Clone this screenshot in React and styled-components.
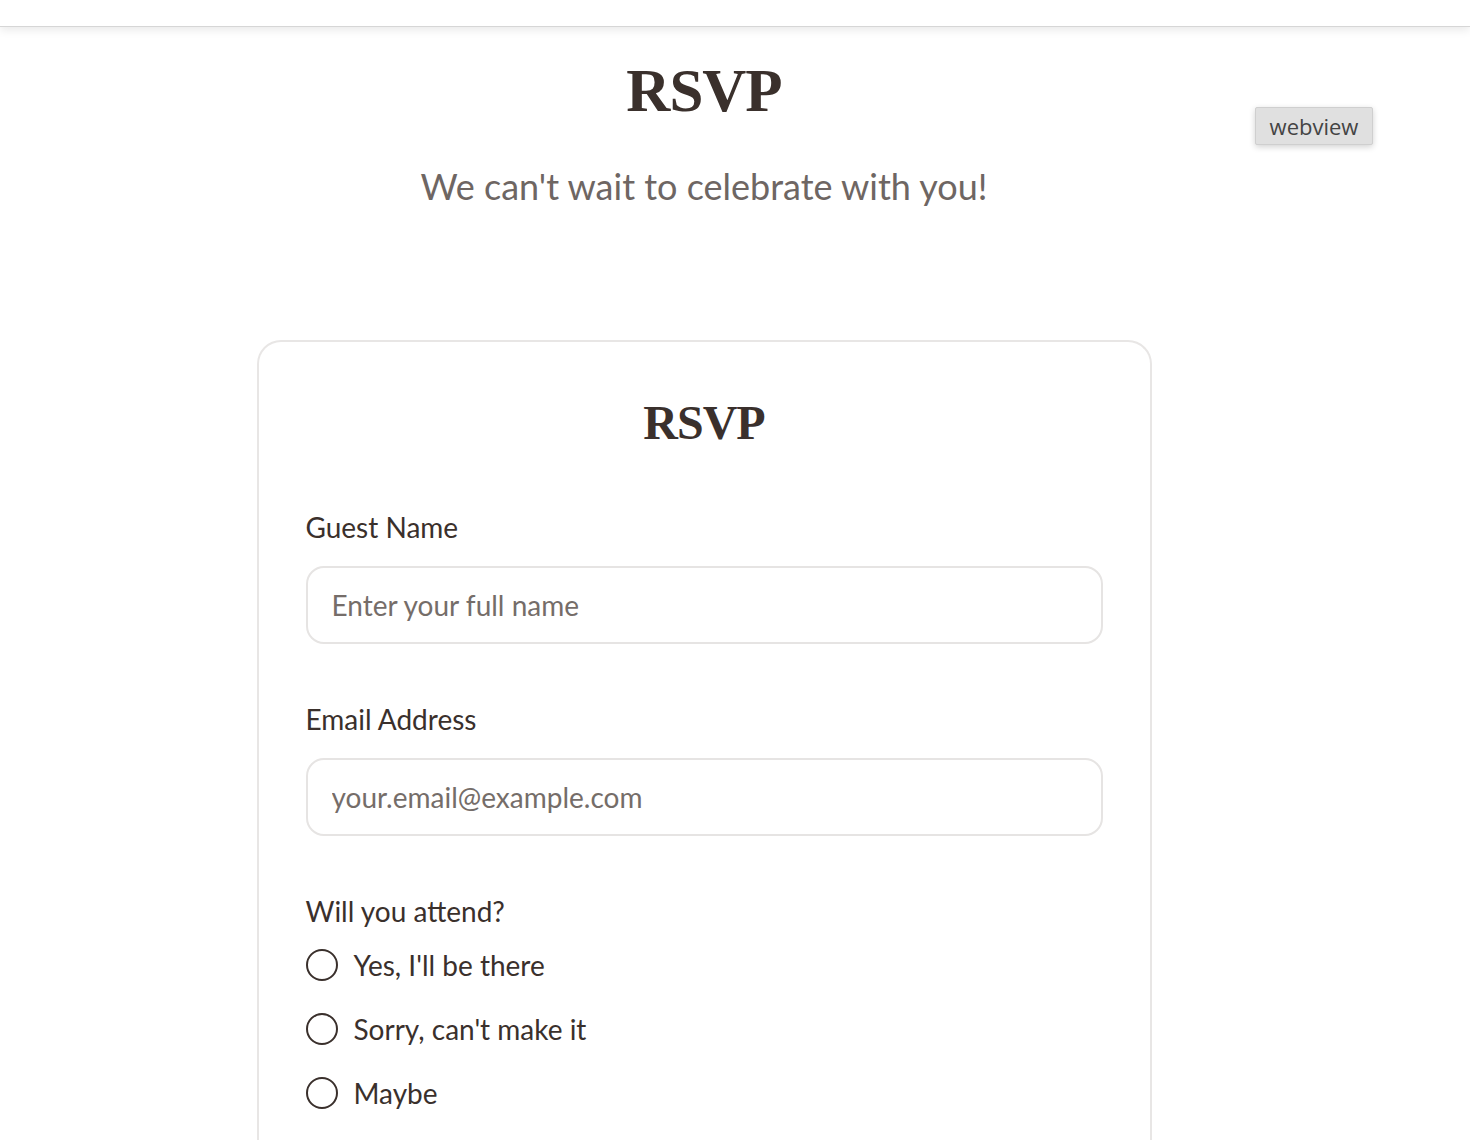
import React from "react";
import styled, { createGlobalStyle } from "styled-components";

const Global = createGlobalStyle`
  html, body { margin: 0; padding: 0; background: #ffffff; }
  body { font-family: Lato, "Open Sans", sans-serif; color: #3a302c; }
  * { box-sizing: border-box; }
`;

const TopBar = styled.div`
  height: 27px;
  background: #ffffff;
  border-bottom: 1px solid #d6d6d6;
  box-shadow: 0 3px 10px rgba(0, 0, 0, 0.09);
  position: relative;
  z-index: 1;
`;

const Page = styled.main`
  position: relative;
  width: 1408px;
  display: flex;
  flex-direction: column;
  align-items: center;
  padding-top: 25px;
`;

const Badge = styled.div`
  position: absolute;
  top: 80px;
  left: 1255px;
  width: 118px;
  height: 38px;
  display: flex;
  align-items: center;
  justify-content: center;
  background: #e0e0e0;
  border: 1px solid #cfcfcf;
  border-radius: 2px;
  box-shadow: 0 2px 6px rgba(0, 0, 0, 0.18);
  font-family: "Open Sans", "Noto Sans", sans-serif;
  font-size: 22px;
  color: #444;
`;

const Title = styled.h1`
  margin: 0;
  font-family: "Liberation Serif", "DejaVu Serif", serif;
  font-weight: 700;
  font-size: ${(p) => p.$size}px;
  line-height: ${(p) => p.$line}px;
  letter-spacing: -1px;
  color: #3a302c;
  text-align: center;
`;

const Subtitle = styled.p`
  margin: 32px 0 0;
  font-size: 36px;
  line-height: 50px;
  color: #6e6663;
`;

const Card = styled.section`
  margin-top: 129px;
  width: 895px;
  border: 2px solid #e8e6e5;
  border-bottom: none;
  border-radius: 24px 24px 0 0;
  padding: 48px 47px 40px;
  display: flex;
  flex-direction: column;
`;

const Field = styled.div`
  display: flex;
  flex-direction: column;
  margin-top: ${(p) => p.$top}px;
`;

const Label = styled.label`
  font-size: 28px;
  line-height: 40px;
  color: #3a302c;
`;

const Input = styled.input`
  margin-top: 19px;
  height: 78px;
  width: 100%;
  border: 2px solid #e6e4e3;
  border-radius: 18px;
  padding: 0 24px;
  font-family: Lato, sans-serif;
  font-size: 28px;
  color: #3a302c;
  outline: none;
  &::placeholder { color: #756d69; }
`;

const Options = styled.div`
  display: flex;
  flex-direction: column;
  gap: 24px;
  margin-top: 14px;
`;

const Option = styled.label`
  display: flex;
  align-items: center;
  gap: 16px;
  height: 40px;
  font-size: 28px;
  color: #3a302c;
`;

const Radio = styled.span`
  width: 32px;
  height: 32px;
  border-radius: 50%;
  border: 2px solid #3a302c;
  flex-shrink: 0;
`;

export default function App() {
  return (
    <>
      <Global />
      <TopBar />
      <Page>
        <Badge>webview</Badge>
        <Title $size={61} $line={77}>RSVP</Title>
        <Subtitle>We can't wait to celebrate with you!</Subtitle>
        <Card>
          <Title $size={48} $line={66}>RSVP</Title>
          <Field $top={51}>
            <Label>Guest Name</Label>
            <Input placeholder="Enter your full name" />
          </Field>
          <Field $top={55}>
            <Label>Email Address</Label>
            <Input placeholder="your.email@example.com" />
          </Field>
          <Field $top={55}>
            <Label>Will you attend?</Label>
            <Options>
              <Option><Radio />Yes, I'll be there</Option>
              <Option><Radio />Sorry, can't make it</Option>
              <Option><Radio />Maybe</Option>
            </Options>
          </Field>
        </Card>
      </Page>
    </>
  );
}
